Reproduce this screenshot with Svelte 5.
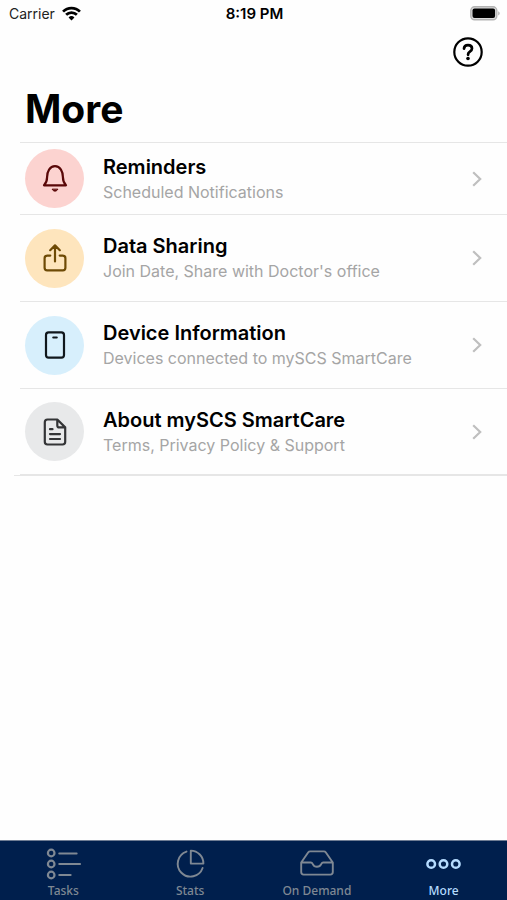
<script>
  const rows = [
    { id: 'bell', title: 'Reminders', sub: 'Scheduled Notifications' },
    { id: 'share', title: 'Data Sharing', sub: "Join Date, Share with Doctor's office" },
    { id: 'device', title: 'Device Information', sub: 'Devices connected to mySCS SmartCare' },
    { id: 'doc', title: 'About mySCS SmartCare', sub: 'Terms, Privacy Policy & Support' }
  ];
  const tabs = ['Tasks', 'Stats', 'On Demand', 'More'];
</script>

<div class="screen">
  <div class="status">
    <div class="carrier">
      <span>Carrier</span>
      <svg width="19" height="15" viewBox="0 0 18 14" fill="none" stroke="#000" stroke-width="2.6">
        <path d="M1 5.2a11.3 11.3 0 0 1 16 0" />
        <path d="M3.9 8.2a7.2 7.2 0 0 1 10.2 0" />
        <path d="M9 13.6 6.2 10.7a4 4 0 0 1 5.6 0Z" fill="#000" stroke="none" />
      </svg>
    </div>
    <time>8:19 PM</time>
    <div class="battery">
      <svg width="30" height="15" viewBox="0 0 30 15">
        <rect x="0.8" y="0.8" width="26" height="13" rx="3.8" fill="#ddd" stroke="#b3b3b3" stroke-width="1.4" />
        <rect x="2.5" y="2.5" width="22.6" height="9.6" rx="2" fill="#000" />
        <path d="M28.2 5.2c2 .8 2 3.5 0 4.3Z" fill="#b3b3b3" />
      </svg>
    </div>
  </div>

  <div class="tools">
    <button class="help" aria-label="Help">
      <svg width="30" height="30" viewBox="0 0 30 30" fill="none" stroke="#000">
        <circle cx="15" cy="15" r="13.7" stroke-width="2.2" />
        <path d="M11 11.6C11.1 9.3 12.800 8.100 15 8.100c2.300 0 4 1.300 4 3.300 0 1.600-.9 2.400-2.100 3.200-1.200.8-1.800 1.300-1.800 2.700v.5" stroke-width="2.700" stroke-linecap="round" />
        <circle cx="15" cy="21.500" r="1.800" fill="#000" stroke="none" />
      </svg>
    </button>
  </div>

  <h1>More</h1>

  <main>
    <ul>
      {#each rows as row}
        <li>
          <a href="#{row.id}">
            <span class="disc {row.id}">
              <svg width="30" height="30" viewBox="0 0 30 30" fill="none" stroke="currentColor" stroke-width="2.2" stroke-linecap="round" stroke-linejoin="round">
                {#if row.id === 'bell'}
                  <path d="M4 21.300c2.500-2.600 3.100-4 3.100-8.300 0-5.500 2.600-10.800 7.900-10.800S22.900 7.500 22.900 13c0 4.300.6 5.700 3.100 8.300Z" />
                  <path d="M12.300 25.500c1.100 2.300 4.300 2.300 5.400 0Z" fill="currentColor" stroke-width="1" />
                {:else if row.id === 'share'}
                  <path d="M10.300 12.600H7.200a2.600 2.600 0 0 0-2.600 2.600v9.600a2.600 2.600 0 0 0 2.600 2.600h15.600a2.600 2.600 0 0 0 2.600-2.600v-9.600a2.600 2.600 0 0 0-2.600-2.600h-3.100M15 18.500V3M10.200 7.200 15 2.400l4.800 4.800" />
                {:else if row.id === 'device'}
                  <rect x="6" y="2.300" width="18" height="25.400" rx="2.600" />
                  <path d="M13.300 7.500h3.400" />
                {:else}
                  <path d="M17.300 2.500H7.500a2.700 2.700 0 0 0-2.700 2.700v19.600a2.700 2.700 0 0 0 2.700 2.700h15a2.700 2.700 0 0 0 2.700-2.700V10.400ZM17.300 2.500v5.900a2 2 0 0 0 2 2h5.900M10 12.200h2.500M10 17.100h10M10 22h10" />
                {/if}
              </svg>
            </span>
            <span class="text">
              <span class="title">{row.title}</span>
              <span class="sub">{row.sub}</span>
            </span>
            <svg class="chevron" width="10" height="16" viewBox="0 0 10 16" fill="none" stroke="#bfbfbf" stroke-width="2.200">
              <path d="M1.200 1.200 8.200 8l-7 6.800" />
            </svg>
          </a>
        </li>
      {/each}
    </ul>
  </main>

  <nav>
    {#each tabs as tab}
      <a href="#{tab}" class:active={tab === 'More'} aria-current={tab === 'More' ? 'page' : undefined}>
        <svg width="36" height="32" viewBox="0 0 36 32" fill="none" stroke="currentColor" stroke-width="1.900" stroke-linecap="round" stroke-linejoin="round">
          {#if tab === 'Tasks'}
            <g stroke-width="2.200">
              <circle cx="6.200" cy="5" r="3.300" />
              <circle cx="6.200" cy="16" r="3.300" />
              <circle cx="6.200" cy="27" r="3.300" />
            </g>
            <path d="M14.200 5.500h17.500M14.200 16h21M14.200 27h11.500" />
          {:else if tab === 'Stats'}
            <path d="M14.500 3.600A12.800 12.800 0 1 0 30.600 20" />
            <path d="M18.800 2.600v13h12.600A12.800 12.800 0 0 0 18.800 2.600Z" />
          {:else if tab === 'On Demand'}
            <path d="M2.200 14.500 9.300 4.300a2.200 2.200 0 0 1 1.800-.9h13.800a2.200 2.200 0 0 1 1.800.9l7.100 10.200v9.600a2.500 2.500 0 0 1-2.500 2.500H4.700a2.500 2.500 0 0 1-2.500-2.500ZM2.200 14.500h9.600c1.200 0 1.500.6 2 1.600.9 1.900 2.200 2.700 4.200 2.700s3.300-.8 4.200-2.700c.5-1 .8-1.600 2-1.600h9.600" />
          {:else}
            <g stroke-width="2.500">
              <circle cx="5.200" cy="16" r="3.800" />
              <circle cx="17.500" cy="16" r="3.800" />
              <circle cx="29.800" cy="16" r="3.800" />
            </g>
          {/if}
        </svg>
        <span>{tab}</span>
      </a>
    {/each}
  </nav>
</div>

<style>
  :global(body) {
    margin: 0;
    background: #fefefe;
  }
  .screen {
    min-height: 100vh;
    display: flex;
    flex-direction: column;
    font-family: Inter, "Liberation Sans", sans-serif;
    color: #000;
  }
  .status {
    display: grid;
    grid-template-columns: 1fr auto 1fr;
    align-items: center;
    height: 28px;
    padding: 0 7px 0 9px;
    font-size: 14px;
    line-height: 20px;
  }
  .carrier {
    display: flex;
    align-items: center;
    gap: 7px;
    color: #222;
  }
  .carrier svg {
    margin-bottom: 2px;
  }
  time {
    font-size: 15px;
    font-weight: 600;
  }
  .battery {
    display: flex;
    justify-content: flex-end;
    padding-bottom: 2px;
  }
  .tools {
    display: flex;
    justify-content: flex-end;
    padding: 9px 24px 0;
  }
  .help {
    display: flex;
    padding: 0;
    border: 0;
    background: none;
  }
  h1 {
    margin: 0;
    padding: 18px 25px 9px;
    font-size: 39px;
    line-height: 48px;
    font-weight: 700;
  }
  main {
    flex: 1;
  }
  ul {
    margin: 0 0 0 14px;
    padding: 0 0 0 6px;
    list-style: none;
    border-bottom: 1px solid #e6e6e6;
  }
  li {
    border-top: 1px solid #e6e6e6;
  }
  li:last-child {
    border-bottom: 1px solid #e6e6e6;
  }
  li a {
    display: flex;
    align-items: center;
    height: 86px;
    padding: 0 25px 0 5px;
    color: inherit;
    text-decoration: none;
  }
  li:first-child a {
    height: 71px;
  }
  li:last-child a {
    height: 85px;
  }
  .disc {
    display: flex;
    align-items: center;
    justify-content: center;
    width: 59px;
    height: 59px;
    margin-right: 19px;
    border-radius: 50%;
  }
  .bell {
    background: #fcd3d0;
    color: #5a0808;
  }
  .share {
    background: #fee5bd;
    color: #6e4a05;
  }
  .device {
    background: #d7effc;
    color: #10171c;
  }
  .doc {
    background: #e8e9ea;
    color: #333436;
  }
  .text {
    flex: 1;
    display: flex;
    flex-direction: column;
  }
  .title {
    font-size: 20px;
    line-height: 26px;
    font-weight: 600;
  }
  .sub {
    font-size: 16px;
    line-height: 24px;
    color: #a5a5a5;
  }
  nav {
    display: grid;
    grid-template-columns: repeat(4, 1fr);
    height: 59px;
    border-top: 1px solid #6f7d94;
    background: #001f4d;
    font-family: "Noto Sans", sans-serif;
    font-size: 12px;
    font-weight: 500;
    line-height: 16px;
  }
  nav a {
    display: flex;
    flex-direction: column;
    align-items: center;
    gap: 3px;
    padding-top: 7px;
    color: #7f8893;
    text-decoration: none;
  }
  nav a.active {
    color: #b5dcff;
  }
</style>
